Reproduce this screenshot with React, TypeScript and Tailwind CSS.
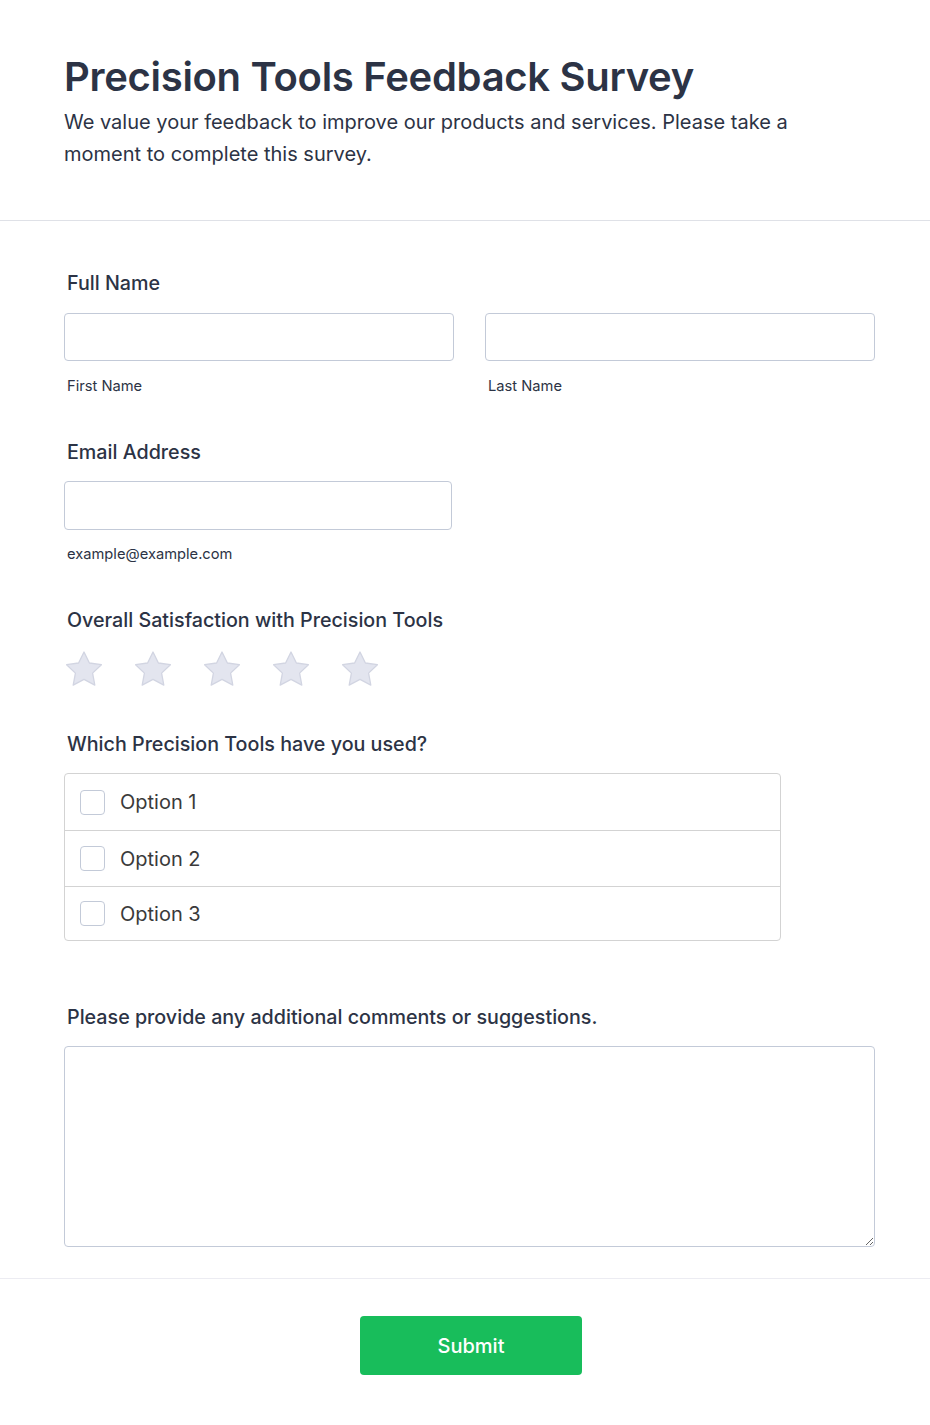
import React from "react";

const Star = () => (
  <svg width="40" height="38" viewBox="0 0 40 38" className="block">
    <path
      d="M20 2 L25.4 13 L37.4 14.7 L28.6 23.1 L30.8 35.1 L20 29.4 L9.2 35.1 L11.4 23.1 L2.6 14.7 L14.6 13 Z"
      fill="#e3e5ef"
      stroke="#d2d5e2"
      strokeWidth="1.3"
      strokeLinejoin="round"
    />
  </svg>
);

const Label = ({ children }: { children: React.ReactNode }) => (
  <label className="block pl-[3px] text-[19.7px] leading-[26px] font-medium text-[#2c3345]">{children}</label>
);

export default function App() {
  return (
    <div
      className="w-[930px] bg-white text-[#2c3345]"
      style={{ fontFamily: "Inter, 'Noto Sans', Arial, sans-serif" }}
    >
      <header className="pl-16 pr-[55px] pt-[53px] pb-[50px] border-b border-[#dfe1e7]">
        <h1 className="text-[40px] leading-[48px] font-semibold tracking-[-0.3px] text-[#2c3345]">
          Precision Tools Feedback Survey
        </h1>
        <p className="mt-[5px] text-[20px] leading-[32px] text-[#2c3345] max-w-[760px]">
          We value your feedback to improve our products and services. Please take a moment to complete this survey.
        </p>
      </header>

      <main className="pl-16 pr-[55px] pt-[49px] pb-[31px] border-b border-[#ececf2]">
        <div>
          <Label>Full Name</Label>
          <div className="mt-[17px] flex gap-[31px]">
            <div className="flex-1">
              <input className="block w-full h-[48px] rounded-[4px] border border-[#c3cad8] bg-white" />
              <div className="mt-[15px] pl-[3px] text-[14.7px] leading-[20px] text-[#2c3345]">First Name</div>
            </div>
            <div className="flex-1">
              <input className="block w-full h-[48px] rounded-[4px] border border-[#c3cad8] bg-white" />
              <div className="mt-[15px] pl-[3px] text-[14.7px] leading-[20px] text-[#2c3345]">Last Name</div>
            </div>
          </div>
        </div>

        <div className="mt-[43px]">
          <Label>Email Address</Label>
          <input className="mt-[16px] block w-[388px] h-[49px] rounded-[4px] border border-[#c3cad8] bg-white" />
          <div className="mt-[14px] pl-[3px] text-[14.7px] leading-[20px] text-[#2c3345]">example@example.com</div>
        </div>

        <div className="mt-[43px]">
          <Label>Overall Satisfaction with Precision Tools</Label>
          <div className="mt-[17px] flex gap-[29px]">
            <Star />
            <Star />
            <Star />
            <Star />
            <Star />
          </div>
        </div>

        <div className="mt-[43px]">
          <Label>Which Precision Tools have you used?</Label>
          <div className="mt-[16px] w-[717px] rounded-[4px] border border-[#d3d3d3] bg-white">
            <div className="flex items-center h-[56px] pl-[15px]">
              <span className="block w-[25px] h-[25px] rounded-[4px] border border-[#c3cad8] bg-white" />
              <span className="ml-[15px] text-[20px] leading-[26px] text-[#3a3a3a]">Option 1</span>
            </div>
            <div className="flex items-center h-[56px] pl-[15px] border-t border-[#d3d3d3]">
              <span className="block w-[25px] h-[25px] rounded-[4px] border border-[#c3cad8] bg-white" />
              <span className="ml-[15px] text-[20px] leading-[26px] text-[#3a3a3a]">Option 2</span>
            </div>
            <div className="flex items-center h-[54px] pl-[15px] border-t border-[#d3d3d3]">
              <span className="block w-[25px] h-[25px] rounded-[4px] border border-[#c3cad8] bg-white" />
              <span className="ml-[15px] text-[20px] leading-[26px] text-[#3a3a3a]">Option 3</span>
            </div>
          </div>
        </div>

        <div className="mt-[63px]">
          <Label>Please provide any additional comments or suggestions.</Label>
          <textarea className="mt-[16px] block w-full h-[201px] rounded-[4px] border border-[#c3cad8] bg-white resize" />
        </div>
      </main>

      <footer className="flex justify-center pl-[12px] pt-[37px] pb-[50px]">
        <button className="w-[222px] h-[59px] rounded-[4px] bg-[#18bd5b] text-white text-[20px] font-medium">
          Submit
        </button>
      </footer>
    </div>
  );
}
